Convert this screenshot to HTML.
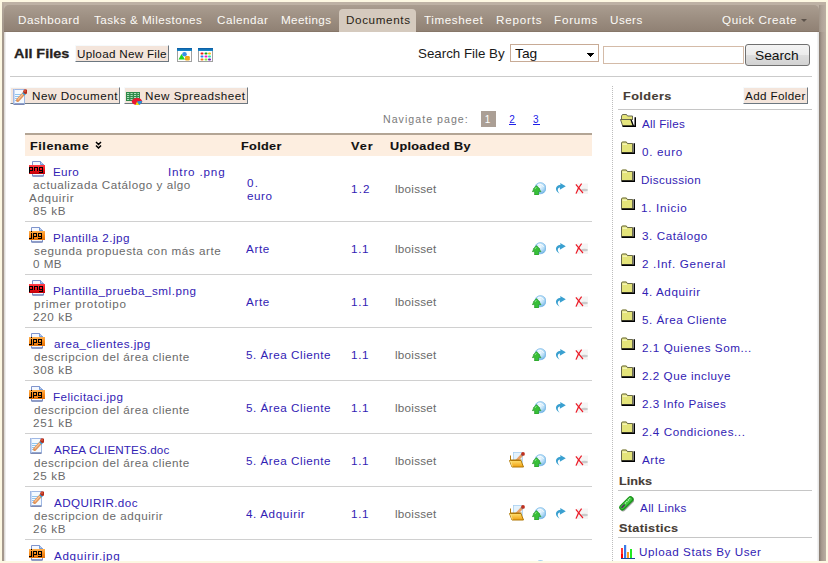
<!DOCTYPE html>
<html><head><meta charset="utf-8">
<style>
html,body{margin:0;padding:0}
body{width:828px;height:563px;overflow:hidden;position:relative;background:#fdf8e2;font-family:"Liberation Sans",sans-serif}
.a{position:absolute}
.t{position:absolute;white-space:pre;font-family:"Liberation Sans",sans-serif}
.btn{position:absolute;box-sizing:border-box;background:#f4e5db;border-top:1px solid #f6fafc;border-left:1px solid #f6fafc;border-right:1px solid #6c7780;border-bottom:1px solid #6c7780}
.sep{position:absolute;height:1px;background:#cccccc}
.ic{position:absolute}
</style></head><body>
<!-- frame -->
<div class="a" style="left:2px;top:2px;width:824px;height:559px;background:#bdb1a4"></div>
<div class="a" style="left:2px;top:2px;width:2px;height:559px;background:linear-gradient(to bottom,#bdb1a4 0,#b0a498 8px,#a69a8e 22px,#a4988c 40px)"></div>
<div class="a" style="left:819px;top:5px;width:7px;height:27px;background:linear-gradient(to right,#a09488,#b0a498 40%,#bbafa3)"></div>
<div class="a" style="left:819px;top:32px;width:7px;height:529px;background:linear-gradient(to right,#857a70,#a89b8f 40%,#bbafa3)"></div>
<div class="a" style="left:4px;top:5px;width:815px;height:27px;border-radius:5px 5px 0 0;background:linear-gradient(to bottom,#aa9d90,#9c8e81 50%,#8f8073)"></div>
<div class="a" style="left:4px;top:31px;width:815px;height:1px;background:#877769"></div>
<div class="a" style="left:339px;top:9px;width:77px;height:23px;border-radius:4px 4px 0 0;background:#d5cabe"></div>
<div class="a" style="left:801px;top:19px;width:0;height:0;border-left:3px solid transparent;border-right:3px solid transparent;border-top:3px solid #5c524a"></div>
<div class="a" style="left:4px;top:32px;width:815px;height:529px;background:#fff"></div>
<div class="a" style="left:4px;top:32px;width:2px;height:529px;background:linear-gradient(to right,#d6d1cc,#f8f8f8)"></div>
<div class="a" style="left:817px;top:32px;width:2px;height:529px;background:linear-gradient(to right,#f7f7f7,#e2e2e2)"></div>

<!-- toolbar -->
<div class="btn" style="left:75px;top:45px;width:94px;height:17px"></div>
<div class="a" style="left:510px;top:44px;width:89px;height:18px;box-sizing:border-box;border:1px solid #c8ab96;background:#fff"></div>
<svg class="a" style="left:587px;top:53px" width="7" height="4" shape-rendering="crispEdges"><path d="M0 0h7v1h-1v1h-1v1h-1v1h-1v-1h-1v-1h-1v-1h-1z" fill="#000"/></svg>
<div class="a" style="left:603px;top:46px;width:141px;height:18px;box-sizing:border-box;border:1px solid #d4bba8;background:#fff"></div>
<div class="a" style="left:745px;top:44px;width:65px;height:22px;box-sizing:border-box;border:1px solid #707070;border-radius:3px;background:linear-gradient(to bottom,#f4f4f4,#ececec 50%,#dedede 51%,#d2d2d2)"></div>
<div class="sep" style="left:10px;top:76px;width:802px;background:#cbcbcb"></div>
<div class="btn" style="left:10px;top:87px;width:110px;height:17px"></div>
<div class="btn" style="left:124px;top:87px;width:124px;height:17px"></div>

<!-- pager -->
<div class="a" style="left:481px;top:111px;width:15px;height:16px;background:#ab9f95"></div>
<div class="a" style="left:509px;top:124px;width:7px;height:1px;background:#2020e8"></div>
<div class="a" style="left:533px;top:124px;width:7px;height:1px;background:#2020e8"></div>

<!-- table -->
<div class="a" style="left:25px;top:133px;width:567px;height:2px;background:#b3a595"></div>
<div class="a" style="left:25px;top:135px;width:567px;height:21px;background:#fdeee0"></div>
<svg class="ic" style="left:95px;top:141px" width="7" height="8" viewBox="0 0 7 8"><path d="M1 1l2.5 2.5 2.5-2.5M1 4.5l2.5 2.5 2.5-2.5" stroke="#000" stroke-width="1.5" fill="none"/></svg>
<div class="sep" style="left:25px;top:221px;width:567px;background:#d0d0d0"></div>
<div class="sep" style="left:25px;top:274px;width:567px;background:#d0d0d0"></div>
<div class="sep" style="left:25px;top:327px;width:567px;background:#d0d0d0"></div>
<div class="sep" style="left:25px;top:380px;width:567px;background:#d0d0d0"></div>
<div class="sep" style="left:25px;top:433px;width:567px;background:#d0d0d0"></div>
<div class="sep" style="left:25px;top:486px;width:567px;background:#d0d0d0"></div>
<div class="sep" style="left:25px;top:539px;width:567px;background:#d0d0d0"></div>

<!-- right panel -->
<div class="a" style="left:612px;top:86px;width:1px;height:475px;background:repeating-linear-gradient(to bottom,#bdbdbd 0,#bdbdbd 1px,transparent 1px,transparent 2px)"></div>
<div class="btn" style="left:743px;top:87px;width:65px;height:17px"></div>
<div class="sep" style="left:618px;top:109px;width:194px;background:#c6c6c6"></div>
<div class="sep" style="left:618px;top:490px;width:194px;background:#c6c6c6"></div>
<div class="sep" style="left:618px;top:537px;width:194px;background:#c6c6c6"></div>


<svg width="0" height="0" style="position:absolute">
<defs>
 <linearGradient id="gRed" x1="0" y1="0" x2="0" y2="1"><stop offset="0" stop-color="#ff4048"/><stop offset="0.5" stop-color="#f01018"/><stop offset="1" stop-color="#c0000a"/></linearGradient>
 <linearGradient id="gOr" x1="0" y1="0" x2="0" y2="1"><stop offset="0" stop-color="#ffb050"/><stop offset="0.5" stop-color="#f88a18"/><stop offset="1" stop-color="#e07008"/></linearGradient>
 <linearGradient id="gFold" x1="0" y1="0" x2="0" y2="1"><stop offset="0" stop-color="#ffe070"/><stop offset="1" stop-color="#f0a010"/></linearGradient>
 <linearGradient id="gTitle" x1="0" y1="0" x2="0" y2="1"><stop offset="0" stop-color="#0a58a0"/><stop offset="1" stop-color="#1a90d0"/></linearGradient>
 <radialGradient id="gGlobe" cx="0.45" cy="0.35" r="0.75"><stop offset="0" stop-color="#f4fbff"/><stop offset="0.5" stop-color="#b4dcf6"/><stop offset="1" stop-color="#5aa6de"/></radialGradient>
 <symbol id="docpage" viewBox="0 0 16 16">
  <path d="M3.5 0.5h8l3 3v11.5h-11z" fill="#f4f8ff" stroke="#8094cc"/>
  <path d="M11.5 0.5v3h3" fill="#b8ccf0" stroke="#5a8ad0" stroke-width="0.8"/>
  <path d="M3.5 15h11" stroke="#6070a8"/>
 </symbol>
 <symbol id="ipng" viewBox="0 0 16 16">
  <use href="#docpage" width="16" height="16"/>
  <rect x="0" y="4" width="16" height="9" fill="url(#gRed)"/>
  <path shape-rendering="crispEdges" d="M0 6h4v1h-3v2h2v-2h1v3h-3v2h-1zM5 6h4v4h-1v-3h-2v3h-1zM10 6h4v6h-4v-1h3v-1h-3zM11 7v2h2v-2z" fill="#000"/>
 </symbol>
 <symbol id="ijpg" viewBox="0 0 16 16">
  <use href="#docpage" x="-1" width="16" height="16"/>
  <rect x="0" y="4" width="16" height="9" fill="url(#gOr)"/>
  <path shape-rendering="crispEdges" d="M2 4h1v1h-1zM2 6h1v6h-3v-1h2zM4 6h4v4h-3v2h-1zM5 7v2h2v-2zM9 6h4v6h-4v-1h3v-1h-3zM10 7v2h2v-2z" fill="#000"/>
 </symbol>
 <symbol id="idoc" viewBox="0 0 16 16"><use href="#inewdoc" width="16" height="16"/></symbol>
 <symbol id="iedit" viewBox="0 0 16 16">
  <rect x="4.5" y="0.5" width="9" height="10" fill="#e4f2fc" stroke="#a8d0f0" stroke-width="0.8"/>
  <path d="M7.2 9.2L13 3" stroke="#e8a068" stroke-width="2.6" stroke-linecap="round"/>
  <path d="M12.2 2.2l1.6 1.6" stroke="#38a8e0" stroke-width="1.2"/>
  <circle cx="14" cy="1.9" r="1.9" fill="#c0301e"/>
  <path d="M1.5 3.5v4.5h11" fill="none" stroke="#b07808" stroke-width="1"/>
  <path d="M0.5 8.5h11.5l2.5 6.5h-11.5z" fill="url(#gFold)" stroke="#b07808" stroke-width="1" stroke-linejoin="round"/>
  <path d="M1.5 8.8l1.8 5.8" stroke="#fff0a0" stroke-width="0.8"/>
 </symbol>
 <symbol id="iglobe" viewBox="0 0 14 13">
  <circle cx="8.4" cy="6.2" r="5.6" fill="url(#gGlobe)" stroke="#6cb0e4" stroke-width="0.6"/>
  <path d="M6 2.5c2.5-0.8 5 0.5 5.5 2.5" stroke="#ffffff" stroke-width="1" fill="none" opacity="0.8"/>
  <path d="M4.5 3.6L8 7.2H7.1L9 9.6H6.6V13H2.6V9.6H0.2L2.1 7.2H1.1z" fill="#38c038" stroke="#188c18" stroke-width="0.6" stroke-linejoin="round"/>
  <path d="M4.4 5l-1.6 2.2" stroke="#a0f0a0" stroke-width="0.8"/>
 </symbol>
 <symbol id="iarrow" viewBox="0 0 11 11">
  <path d="M5 11C0 8.5 -1 3 5.5 1.8L5.2 0L10.8 3.2L4.8 6.8L5 4.6C2.5 5 1.6 7.5 5 11z" fill="#3aa0d0"/>
 </symbol>
 <symbol id="ix" viewBox="0 0 13 11">
  <rect x="2" y="0.5" width="11" height="10.5" fill="#f5f5f5"/>
  <ellipse cx="9.5" cy="7" rx="3.4" ry="1.3" fill="#cacaca"/>
  <path d="M0.9 1.4C3 4 5.5 7.5 8 10" stroke="#ec1c28" stroke-width="1.25" fill="none"/>
  <path d="M6.6 0.6C4.5 3 2.5 6.5 1 10.6" stroke="#ec1c28" stroke-width="1.25" fill="none"/>
 </symbol>
 <symbol id="ifold" viewBox="0 0 15 13">
  <path d="M1 12v-10l1-1.5h4.5l1 1.5h5.5v10z" fill="#e4e47a"/>
  <path d="M1.5 11.5v-9.5l0.8-1h4l1 1.5h5.2v9z" fill="none" stroke="#5a5a48" stroke-width="0.9"/>
  <path d="M2.5 3.2h4.5" stroke="#fafad0" stroke-width="1"/>
  <path d="M1.5 12.2h12.8v-10" stroke="#000" stroke-width="1.6" fill="none"/>
 </symbol>
 <symbol id="ifoldopen" viewBox="0 0 16 13">
  <path d="M1.5 7v-5l1-1.5h4l1 1.5h5v4" fill="#e4e47a" stroke="#5a5a48" stroke-width="0.9"/>
  <path d="M0.5 5.5h10.5l2.2 6.5h-10.5z" fill="#e6e67e" stroke="#5a5a48" stroke-width="0.9"/>
  <path d="M2.5 12.2h12.8v-9" stroke="#000" stroke-width="1.6" fill="none"/>
  <path d="M11 5.5l2.4 6.5" stroke="#000" stroke-width="1.2"/>
 </symbol>
 <symbol id="iclip" viewBox="0 0 16 16">
  <path d="M5 12l7.8-7.8" stroke="#282828" stroke-width="6.6" stroke-linecap="round" opacity="0.4"/>
  <path d="M4.4 11.4l8-8" stroke="#1c961c" stroke-width="6.2" stroke-linecap="round"/>
  <path d="M4.2 11.2l8-8" stroke="#40c840" stroke-width="3.6" stroke-linecap="round"/>
  <path d="M7 7.4l5-5" stroke="#e0ffe0" stroke-width="1.2" stroke-dasharray="1.2 0.9"/>
  <path d="M4 11.4l2.2-2.2" stroke="#503858" stroke-width="1.8" stroke-linecap="round"/>
 </symbol>
 <symbol id="ichart" viewBox="0 0 15 14">
  <rect x="1" y="3" width="2" height="10" fill="#ff3838"/>
  <rect x="1" y="9" width="2" height="4" fill="#f00"/>
  <rect x="4" y="0" width="2.2" height="13" fill="#3a78e8"/>
  <rect x="7" y="7" width="2" height="6" fill="#f8a020"/>
  <rect x="10" y="4" width="2" height="9" fill="#22e822"/>
  <rect x="1" y="13" width="14" height="1.4" fill="#1a4a9a"/>
 </symbol>
 <symbol id="iwin1" viewBox="0 0 15 14">
  <rect x="0.5" y="0.5" width="14" height="13" fill="#fff" stroke="#a0a0a0"/>
  <rect x="0" y="0" width="15" height="3" fill="url(#gTitle)"/>
  <path d="M1.5 11.5l3-5.5 3.5 5.5z" fill="#20d820"/>
  <circle cx="7.5" cy="6.3" r="2.3" fill="#3a90e8"/>
  <rect x="8" y="8" width="4.8" height="4.5" rx="1.2" fill="#f0a818"/>
 </symbol>
 <symbol id="iwin2" viewBox="0 0 15 14">
  <rect x="0.5" y="0.5" width="14" height="13" fill="#fff" stroke="#a0a0a0"/>
  <rect x="0" y="0" width="15" height="3" fill="url(#gTitle)"/>
  <rect x="2.5" y="4.5" width="3" height="2" rx="1" fill="#f01818"/><rect x="6.5" y="4.5" width="3" height="2" rx="1" fill="#18a018"/><rect x="10" y="4.5" width="3" height="2" rx="1" fill="#f0c010"/>
  <rect x="2.5" y="7.5" width="3" height="2" rx="1" fill="#2080f0"/><rect x="6.5" y="7.5" width="3" height="2" rx="1" fill="#f018c8"/><rect x="10" y="7.5" width="3" height="2" rx="1" fill="#20e8b0"/>
  <rect x="2.5" y="10.5" width="3" height="2" rx="1" fill="#f87818"/><rect x="6.5" y="10.5" width="3" height="2" rx="1" fill="#80f040"/><rect x="10" y="10.5" width="3" height="2" rx="1" fill="#7010c0"/>
 </symbol>
 <symbol id="inewdoc" viewBox="0 0 16 16">
  <rect x="2.5" y="0.5" width="11" height="14.3" fill="#f4faff" stroke="#a0b8e4"/>
  <path d="M2.5 15.2h11" stroke="#6878a8" stroke-width="1.3"/>
  <path d="M3.5 0.5v14" stroke="#c8d8f4" stroke-width="1"/>
  <path d="M4 5.5h6M4 7.5h6M4 9.5h5M4 11.5h4" stroke="#90c4ee"/>
  <path d="M6.6 11.3L12.8 4.6" stroke="#e2945a" stroke-width="3.4" stroke-linecap="round"/>
  <path d="M6.8 10.6L12.4 4.6" stroke="#fac89a" stroke-width="1.1"/>
  <path d="M11.8 3.6l2.4 2.4" stroke="#30a0e0" stroke-width="1.7"/>
  <circle cx="14.5" cy="2.6" r="2.3" fill="#b42a18"/>
  <circle cx="14" cy="2" r="0.9" fill="#e06040"/>
 </symbol>
 <symbol id="isheet" viewBox="0 0 17 13">
  <rect x="0" y="0" width="14" height="9" fill="#2f8a4a"/>
  <path d="M1 1.5h12M1 3.5h12M1 5.5h12M1 7.5h12" stroke="#bde8c8" stroke-width="0.9" stroke-dasharray="2.2 1.3"/>
  <ellipse cx="11" cy="9.5" rx="5.2" ry="3.5" fill="#e81830"/>
  <path d="M11 9.5l-1.5 3.5h4z" fill="#f0e010"/>
  <path d="M11 9.5l4.8-0.8 0 2-2.5 2.3z" fill="#2098e0"/>
 </symbol>
</defs>
</svg>
<svg class="ic" style="left:177px;top:48px" width="15" height="14"><use href="#iwin1" width="15" height="14"/></svg>
<svg class="ic" style="left:198px;top:48px" width="15" height="14"><use href="#iwin2" width="15" height="14"/></svg>
<svg class="ic" style="left:11px;top:89px" width="16" height="16"><use href="#inewdoc" width="16" height="16"/></svg>
<svg class="ic" style="left:126px;top:92px" width="17" height="13"><use href="#isheet" width="17" height="13"/></svg>
<svg class="ic" style="left:29px;top:161px" width="16" height="16"><use href="#ipng" width="16" height="16"/></svg>
<svg class="ic" style="left:29px;top:227px" width="16" height="16"><use href="#ijpg" width="16" height="16"/></svg>
<svg class="ic" style="left:29px;top:280px" width="16" height="16"><use href="#ipng" width="16" height="16"/></svg>
<svg class="ic" style="left:29px;top:333px" width="16" height="16"><use href="#ijpg" width="16" height="16"/></svg>
<svg class="ic" style="left:29px;top:386px" width="16" height="16"><use href="#ijpg" width="16" height="16"/></svg>
<svg class="ic" style="left:28px;top:438px" width="16" height="16"><use href="#idoc" width="16" height="16"/></svg>
<svg class="ic" style="left:28px;top:491px" width="16" height="16"><use href="#idoc" width="16" height="16"/></svg>
<svg class="ic" style="left:29px;top:545px" width="16" height="16"><use href="#ijpg" width="16" height="16"/></svg>
<svg class="ic" style="left:532px;top:182px" width="14" height="13"><use href="#iglobe" width="14" height="13"/></svg>
<svg class="ic" style="left:555px;top:183px" width="11" height="11"><use href="#iarrow" width="11" height="11"/></svg>
<svg class="ic" style="left:575px;top:183px" width="13" height="11"><use href="#ix" width="13" height="11"/></svg>
<svg class="ic" style="left:532px;top:242px" width="14" height="13"><use href="#iglobe" width="14" height="13"/></svg>
<svg class="ic" style="left:555px;top:243px" width="11" height="11"><use href="#iarrow" width="11" height="11"/></svg>
<svg class="ic" style="left:575px;top:243px" width="13" height="11"><use href="#ix" width="13" height="11"/></svg>
<svg class="ic" style="left:532px;top:295px" width="14" height="13"><use href="#iglobe" width="14" height="13"/></svg>
<svg class="ic" style="left:555px;top:296px" width="11" height="11"><use href="#iarrow" width="11" height="11"/></svg>
<svg class="ic" style="left:575px;top:296px" width="13" height="11"><use href="#ix" width="13" height="11"/></svg>
<svg class="ic" style="left:532px;top:348px" width="14" height="13"><use href="#iglobe" width="14" height="13"/></svg>
<svg class="ic" style="left:555px;top:349px" width="11" height="11"><use href="#iarrow" width="11" height="11"/></svg>
<svg class="ic" style="left:575px;top:349px" width="13" height="11"><use href="#ix" width="13" height="11"/></svg>
<svg class="ic" style="left:532px;top:401px" width="14" height="13"><use href="#iglobe" width="14" height="13"/></svg>
<svg class="ic" style="left:555px;top:402px" width="11" height="11"><use href="#iarrow" width="11" height="11"/></svg>
<svg class="ic" style="left:575px;top:402px" width="13" height="11"><use href="#ix" width="13" height="11"/></svg>
<svg class="ic" style="left:509px;top:452px" width="16" height="16"><use href="#iedit" width="16" height="16"/></svg>
<svg class="ic" style="left:532px;top:454px" width="14" height="13"><use href="#iglobe" width="14" height="13"/></svg>
<svg class="ic" style="left:555px;top:455px" width="11" height="11"><use href="#iarrow" width="11" height="11"/></svg>
<svg class="ic" style="left:575px;top:455px" width="13" height="11"><use href="#ix" width="13" height="11"/></svg>
<svg class="ic" style="left:509px;top:505px" width="16" height="16"><use href="#iedit" width="16" height="16"/></svg>
<svg class="ic" style="left:532px;top:507px" width="14" height="13"><use href="#iglobe" width="14" height="13"/></svg>
<svg class="ic" style="left:555px;top:508px" width="11" height="11"><use href="#iarrow" width="11" height="11"/></svg>
<svg class="ic" style="left:575px;top:508px" width="13" height="11"><use href="#ix" width="13" height="11"/></svg>
<svg class="ic" style="left:532px;top:560px" width="14" height="13"><use href="#iglobe" width="14" height="13"/></svg>
<svg class="ic" style="left:555px;top:561px" width="11" height="11"><use href="#iarrow" width="11" height="11"/></svg>
<svg class="ic" style="left:575px;top:561px" width="13" height="11"><use href="#ix" width="13" height="11"/></svg>
<svg class="ic" style="left:620px;top:114px" width="16" height="13"><use href="#ifoldopen" width="16" height="13"/></svg>
<svg class="ic" style="left:620px;top:141px" width="15" height="13"><use href="#ifold" width="15" height="13"/></svg>
<svg class="ic" style="left:620px;top:169px" width="15" height="13"><use href="#ifold" width="15" height="13"/></svg>
<svg class="ic" style="left:620px;top:197px" width="15" height="13"><use href="#ifold" width="15" height="13"/></svg>
<svg class="ic" style="left:620px;top:225px" width="15" height="13"><use href="#ifold" width="15" height="13"/></svg>
<svg class="ic" style="left:620px;top:253px" width="15" height="13"><use href="#ifold" width="15" height="13"/></svg>
<svg class="ic" style="left:620px;top:281px" width="15" height="13"><use href="#ifold" width="15" height="13"/></svg>
<svg class="ic" style="left:620px;top:309px" width="15" height="13"><use href="#ifold" width="15" height="13"/></svg>
<svg class="ic" style="left:620px;top:337px" width="15" height="13"><use href="#ifold" width="15" height="13"/></svg>
<svg class="ic" style="left:620px;top:365px" width="15" height="13"><use href="#ifold" width="15" height="13"/></svg>
<svg class="ic" style="left:620px;top:393px" width="15" height="13"><use href="#ifold" width="15" height="13"/></svg>
<svg class="ic" style="left:620px;top:421px" width="15" height="13"><use href="#ifold" width="15" height="13"/></svg>
<svg class="ic" style="left:620px;top:449px" width="15" height="13"><use href="#ifold" width="15" height="13"/></svg>
<svg class="ic" style="left:618px;top:496px" width="16" height="16"><use href="#iclip" width="16" height="16"/></svg>
<svg class="ic" style="left:620px;top:545px" width="15" height="14"><use href="#ichart" width="15" height="14"/></svg>
<div class="t" style="left:17.6px;top:15.0px;font-size:11px;line-height:11px;font-weight:400;color:#fcfaf6;letter-spacing:0.49px;transform:scaleX(1.060);transform-origin:0 0;">Dashboard</div>
<div class="t" style="left:94.0px;top:15.0px;font-size:11px;line-height:11px;font-weight:400;color:#fcfaf6;letter-spacing:0.45px;transform:scaleX(1.060);transform-origin:0 0;">Tasks &amp; Milestones</div>
<div class="t" style="left:216.6px;top:15.0px;font-size:11px;line-height:11px;font-weight:400;color:#fcfaf6;letter-spacing:0.47px;transform:scaleX(1.060);transform-origin:0 0;">Calendar</div>
<div class="t" style="left:281.4px;top:15.0px;font-size:11px;line-height:11px;font-weight:400;color:#fcfaf6;letter-spacing:0.36px;transform:scaleX(1.060);transform-origin:0 0;">Meetings</div>
<div class="t" style="left:424.2px;top:15.0px;font-size:11px;line-height:11px;font-weight:400;color:#fcfaf6;letter-spacing:0.56px;transform:scaleX(1.060);transform-origin:0 0;">Timesheet</div>
<div class="t" style="left:495.9px;top:15.0px;font-size:11px;line-height:11px;font-weight:400;color:#fcfaf6;letter-spacing:0.75px;transform:scaleX(1.060);transform-origin:0 0;">Reports</div>
<div class="t" style="left:553.9px;top:15.0px;font-size:11px;line-height:11px;font-weight:400;color:#fcfaf6;letter-spacing:0.72px;transform:scaleX(1.060);transform-origin:0 0;">Forums</div>
<div class="t" style="left:609.9px;top:15.0px;font-size:11px;line-height:11px;font-weight:400;color:#fcfaf6;letter-spacing:0.43px;transform:scaleX(1.060);transform-origin:0 0;">Users</div>
<div class="t" style="left:722.4px;top:15.0px;font-size:11px;line-height:11px;font-weight:400;color:#fcfaf6;letter-spacing:0.55px;transform:scaleX(1.060);transform-origin:0 0;">Quick Create</div>
<div class="t" style="left:345.6px;top:15.0px;font-size:11px;line-height:11px;font-weight:400;color:#2a1e16;letter-spacing:0.59px;transform:scaleX(1.060);transform-origin:0 0;">Documents</div>
<div class="t" style="left:13.5px;top:47.0px;font-size:13px;line-height:13px;font-weight:700;color:#262220;letter-spacing:0.00px;transform:scaleX(1.106);transform-origin:0 0;-webkit-text-stroke:0.3px #262220;">All Files</div>
<div class="t" style="left:76.6px;top:49.0px;font-size:11px;line-height:11px;font-weight:400;color:#111;letter-spacing:0.27px;transform:scaleX(1.060);transform-origin:0 0;">Upload New File</div>
<div class="t" style="left:418.2px;top:47.0px;font-size:13px;line-height:13px;font-weight:400;color:#1a1a1a;letter-spacing:0.00px;transform:scaleX(1.025);transform-origin:0 0;">Search File By</div>
<div class="t" style="left:515.3px;top:47.0px;font-size:13px;line-height:13px;font-weight:400;color:#111;letter-spacing:0.02px;transform:scaleX(1.060);transform-origin:0 0;">Tag</div>
<div class="t" style="left:755.1px;top:49.0px;font-size:13px;line-height:13px;font-weight:400;color:#111;letter-spacing:0.00px;transform:scaleX(1.060);transform-origin:0 0;">Search</div>
<div class="t" style="left:31.7px;top:91.0px;font-size:11px;line-height:11px;font-weight:400;color:#111;letter-spacing:0.49px;transform:scaleX(1.060);transform-origin:0 0;">New Document</div>
<div class="t" style="left:145.2px;top:91.0px;font-size:11px;line-height:11px;font-weight:400;color:#111;letter-spacing:0.50px;transform:scaleX(1.060);transform-origin:0 0;">New Spreadsheet</div>
<div class="t" style="left:382.6px;top:115.0px;font-size:10px;line-height:10px;font-weight:400;color:#7a7a7a;letter-spacing:0.97px;transform:scaleX(1.060);transform-origin:0 0;">Navigate page:</div>
<div class="t" style="left:484.7px;top:115.0px;font-size:10px;line-height:10px;font-weight:400;color:#fff;letter-spacing:0.00px;">1</div>
<div class="t" style="left:509.2px;top:115.0px;font-size:10px;line-height:10px;font-weight:400;color:#2020e8;letter-spacing:0.00px;">2</div>
<div class="t" style="left:533.0px;top:115.0px;font-size:10px;line-height:10px;font-weight:400;color:#2020e8;letter-spacing:0.00px;">3</div>
<div class="t" style="left:29.6px;top:141.0px;font-size:11px;line-height:11px;font-weight:700;color:#111;letter-spacing:0.48px;transform:scaleX(1.150);transform-origin:0 0;-webkit-text-stroke:0.12px #111;">Filename</div>
<div class="t" style="left:240.5px;top:141.0px;font-size:11px;line-height:11px;font-weight:700;color:#111;letter-spacing:0.31px;transform:scaleX(1.150);transform-origin:0 0;-webkit-text-stroke:0.12px #111;">Folder</div>
<div class="t" style="left:351.4px;top:141.0px;font-size:11px;line-height:11px;font-weight:700;color:#111;letter-spacing:0.89px;transform:scaleX(1.150);transform-origin:0 0;-webkit-text-stroke:0.12px #111;">Ver</div>
<div class="t" style="left:390.3px;top:141.0px;font-size:11px;line-height:11px;font-weight:700;color:#111;letter-spacing:0.27px;transform:scaleX(1.150);transform-origin:0 0;-webkit-text-stroke:0.12px #111;">Uploaded By</div>
<div class="t" style="left:622.5px;top:91.0px;font-size:11px;line-height:11px;font-weight:700;color:#463c35;letter-spacing:0.39px;transform:scaleX(1.150);transform-origin:0 0;-webkit-text-stroke:0.12px #463c35;">Folders</div>
<div class="t" style="left:745.3px;top:91.0px;font-size:11px;line-height:11px;font-weight:400;color:#111;letter-spacing:0.34px;transform:scaleX(1.060);transform-origin:0 0;">Add Folder</div>
<div class="t" style="left:641.8px;top:119.0px;font-size:11px;line-height:11px;font-weight:400;color:#3222b4;letter-spacing:0.23px;transform:scaleX(1.060);transform-origin:0 0;">All Files</div>
<div class="t" style="left:641.8px;top:147.0px;font-size:11px;line-height:11px;font-weight:400;color:#3222b4;letter-spacing:0.62px;transform:scaleX(1.060);transform-origin:0 0;">0. euro</div>
<div class="t" style="left:640.7px;top:175.0px;font-size:11px;line-height:11px;font-weight:400;color:#3222b4;letter-spacing:0.35px;transform:scaleX(1.060);transform-origin:0 0;">Discussion</div>
<div class="t" style="left:640.7px;top:203.0px;font-size:11px;line-height:11px;font-weight:400;color:#3222b4;letter-spacing:0.66px;transform:scaleX(1.060);transform-origin:0 0;">1. Inicio</div>
<div class="t" style="left:641.8px;top:231.0px;font-size:11px;line-height:11px;font-weight:400;color:#3222b4;letter-spacing:0.53px;transform:scaleX(1.060);transform-origin:0 0;">3. Cat&aacute;logo</div>
<div class="t" style="left:641.8px;top:259.0px;font-size:11px;line-height:11px;font-weight:400;color:#3222b4;letter-spacing:0.64px;transform:scaleX(1.060);transform-origin:0 0;">2 .Inf. General</div>
<div class="t" style="left:641.8px;top:287.0px;font-size:11px;line-height:11px;font-weight:400;color:#3222b4;letter-spacing:0.53px;transform:scaleX(1.060);transform-origin:0 0;">4. Adquirir</div>
<div class="t" style="left:641.8px;top:315.0px;font-size:11px;line-height:11px;font-weight:400;color:#3222b4;letter-spacing:0.50px;transform:scaleX(1.060);transform-origin:0 0;">5. &Aacute;rea Cliente</div>
<div class="t" style="left:641.8px;top:343.0px;font-size:11px;line-height:11px;font-weight:400;color:#3222b4;letter-spacing:0.53px;transform:scaleX(1.060);transform-origin:0 0;">2.1 Quienes Som...</div>
<div class="t" style="left:641.8px;top:371.0px;font-size:11px;line-height:11px;font-weight:400;color:#3222b4;letter-spacing:0.50px;transform:scaleX(1.060);transform-origin:0 0;">2.2 Que incluye</div>
<div class="t" style="left:641.8px;top:399.0px;font-size:11px;line-height:11px;font-weight:400;color:#3222b4;letter-spacing:0.45px;transform:scaleX(1.060);transform-origin:0 0;">2.3 Info Paises</div>
<div class="t" style="left:641.8px;top:427.0px;font-size:11px;line-height:11px;font-weight:400;color:#3222b4;letter-spacing:0.53px;transform:scaleX(1.060);transform-origin:0 0;">2.4 Condiciones...</div>
<div class="t" style="left:641.8px;top:455.0px;font-size:11px;line-height:11px;font-weight:400;color:#3222b4;letter-spacing:0.47px;transform:scaleX(1.060);transform-origin:0 0;">Arte</div>
<div class="t" style="left:618.5px;top:476.0px;font-size:11px;line-height:11px;font-weight:700;color:#463c35;letter-spacing:0.00px;transform:scaleX(1.148);transform-origin:0 0;-webkit-text-stroke:0.12px #463c35;">Links</div>
<div class="t" style="left:639.6px;top:503.0px;font-size:11px;line-height:11px;font-weight:400;color:#3222b4;letter-spacing:0.35px;transform:scaleX(1.060);transform-origin:0 0;">All Links</div>
<div class="t" style="left:618.5px;top:523.0px;font-size:11px;line-height:11px;font-weight:700;color:#463c35;letter-spacing:0.28px;transform:scaleX(1.150);transform-origin:0 0;-webkit-text-stroke:0.12px #463c35;">Statistics</div>
<div class="t" style="left:638.9px;top:547.0px;font-size:11px;line-height:11px;font-weight:400;color:#3222b4;letter-spacing:0.52px;transform:scaleX(1.060);transform-origin:0 0;">Upload Stats By User</div>
<div class="t" style="left:52.9px;top:167.0px;font-size:11px;line-height:11px;font-weight:400;color:#3222b4;letter-spacing:0.31px;transform:scaleX(1.060);transform-origin:0 0;">Euro</div>
<div class="t" style="left:167.7px;top:167.0px;font-size:11px;line-height:11px;font-weight:400;color:#3222b4;letter-spacing:0.77px;transform:scaleX(1.060);transform-origin:0 0;">Intro .png</div>
<div class="t" style="left:33.4px;top:180.0px;font-size:11px;line-height:11px;font-weight:400;color:#6a6a6a;letter-spacing:0.51px;transform:scaleX(1.060);transform-origin:0 0;">actualizada Cat&aacute;logo y algo</div>
<div class="t" style="left:29.3px;top:193.0px;font-size:11px;line-height:11px;font-weight:400;color:#6a6a6a;letter-spacing:0.61px;transform:scaleX(1.060);transform-origin:0 0;">Adquirir</div>
<div class="t" style="left:33.4px;top:206.0px;font-size:11px;line-height:11px;font-weight:400;color:#6a6a6a;letter-spacing:0.64px;transform:scaleX(1.060);transform-origin:0 0;">85 kB</div>
<div class="t" style="left:246.7px;top:178.0px;font-size:11px;line-height:11px;font-weight:400;color:#3222b4;letter-spacing:1.15px;transform:scaleX(1.060);transform-origin:0 0;">0.</div>
<div class="t" style="left:246.7px;top:191.0px;font-size:11px;line-height:11px;font-weight:400;color:#3222b4;letter-spacing:0.53px;transform:scaleX(1.060);transform-origin:0 0;">euro</div>
<div class="t" style="left:350.6px;top:184.0px;font-size:11px;line-height:11px;font-weight:400;color:#3222b4;letter-spacing:1.11px;transform:scaleX(1.060);transform-origin:0 0;">1.2</div>
<div class="t" style="left:395.0px;top:184.0px;font-size:11px;line-height:11px;font-weight:400;color:#6a6a6a;letter-spacing:0.23px;transform:scaleX(1.060);transform-origin:0 0;">lboisset</div>
<div class="t" style="left:52.9px;top:233.0px;font-size:11px;line-height:11px;font-weight:400;color:#3222b4;letter-spacing:0.48px;transform:scaleX(1.060);transform-origin:0 0;">Plantilla 2.jpg</div>
<div class="t" style="left:33.8px;top:246.0px;font-size:11px;line-height:11px;font-weight:400;color:#6a6a6a;letter-spacing:0.53px;transform:scaleX(1.060);transform-origin:0 0;">segunda propuesta con m&aacute;s arte</div>
<div class="t" style="left:33.3px;top:259.0px;font-size:11px;line-height:11px;font-weight:400;color:#6a6a6a;letter-spacing:0.44px;transform:scaleX(1.060);transform-origin:0 0;">0 MB</div>
<div class="t" style="left:246.3px;top:244.0px;font-size:11px;line-height:11px;font-weight:400;color:#3222b4;letter-spacing:0.60px;transform:scaleX(1.060);transform-origin:0 0;">Arte</div>
<div class="t" style="left:350.9px;top:244.0px;font-size:11px;line-height:11px;font-weight:400;color:#3222b4;letter-spacing:0.64px;transform:scaleX(1.060);transform-origin:0 0;">1.1</div>
<div class="t" style="left:395.0px;top:244.0px;font-size:11px;line-height:11px;font-weight:400;color:#6a6a6a;letter-spacing:0.23px;transform:scaleX(1.060);transform-origin:0 0;">lboisset</div>
<div class="t" style="left:52.9px;top:286.0px;font-size:11px;line-height:11px;font-weight:400;color:#3222b4;letter-spacing:0.49px;transform:scaleX(1.060);transform-origin:0 0;">Plantilla_prueba_sml.png</div>
<div class="t" style="left:33.8px;top:299.0px;font-size:11px;line-height:11px;font-weight:400;color:#6a6a6a;letter-spacing:0.65px;transform:scaleX(1.060);transform-origin:0 0;">primer prototipo</div>
<div class="t" style="left:33.3px;top:312.0px;font-size:11px;line-height:11px;font-weight:400;color:#6a6a6a;letter-spacing:0.62px;transform:scaleX(1.060);transform-origin:0 0;">220 kB</div>
<div class="t" style="left:246.3px;top:297.0px;font-size:11px;line-height:11px;font-weight:400;color:#3222b4;letter-spacing:0.60px;transform:scaleX(1.060);transform-origin:0 0;">Arte</div>
<div class="t" style="left:350.9px;top:297.0px;font-size:11px;line-height:11px;font-weight:400;color:#3222b4;letter-spacing:0.64px;transform:scaleX(1.060);transform-origin:0 0;">1.1</div>
<div class="t" style="left:395.0px;top:297.0px;font-size:11px;line-height:11px;font-weight:400;color:#6a6a6a;letter-spacing:0.23px;transform:scaleX(1.060);transform-origin:0 0;">lboisset</div>
<div class="t" style="left:54.0px;top:339.0px;font-size:11px;line-height:11px;font-weight:400;color:#3222b4;letter-spacing:0.48px;transform:scaleX(1.060);transform-origin:0 0;">area_clientes.jpg</div>
<div class="t" style="left:33.8px;top:352.0px;font-size:11px;line-height:11px;font-weight:400;color:#6a6a6a;letter-spacing:0.49px;transform:scaleX(1.060);transform-origin:0 0;">descripcion del &aacute;rea cliente</div>
<div class="t" style="left:33.3px;top:365.0px;font-size:11px;line-height:11px;font-weight:400;color:#6a6a6a;letter-spacing:0.62px;transform:scaleX(1.060);transform-origin:0 0;">308 kB</div>
<div class="t" style="left:246.3px;top:350.0px;font-size:11px;line-height:11px;font-weight:400;color:#3222b4;letter-spacing:0.50px;transform:scaleX(1.060);transform-origin:0 0;">5. &Aacute;rea Cliente</div>
<div class="t" style="left:350.9px;top:350.0px;font-size:11px;line-height:11px;font-weight:400;color:#3222b4;letter-spacing:0.64px;transform:scaleX(1.060);transform-origin:0 0;">1.1</div>
<div class="t" style="left:395.0px;top:350.0px;font-size:11px;line-height:11px;font-weight:400;color:#6a6a6a;letter-spacing:0.23px;transform:scaleX(1.060);transform-origin:0 0;">lboisset</div>
<div class="t" style="left:52.9px;top:392.0px;font-size:11px;line-height:11px;font-weight:400;color:#3222b4;letter-spacing:0.42px;transform:scaleX(1.060);transform-origin:0 0;">Felicitaci.jpg</div>
<div class="t" style="left:33.8px;top:405.0px;font-size:11px;line-height:11px;font-weight:400;color:#6a6a6a;letter-spacing:0.49px;transform:scaleX(1.060);transform-origin:0 0;">descripcion del &aacute;rea cliente</div>
<div class="t" style="left:33.3px;top:418.0px;font-size:11px;line-height:11px;font-weight:400;color:#6a6a6a;letter-spacing:0.62px;transform:scaleX(1.060);transform-origin:0 0;">251 kB</div>
<div class="t" style="left:246.3px;top:403.0px;font-size:11px;line-height:11px;font-weight:400;color:#3222b4;letter-spacing:0.50px;transform:scaleX(1.060);transform-origin:0 0;">5. &Aacute;rea Cliente</div>
<div class="t" style="left:350.9px;top:403.0px;font-size:11px;line-height:11px;font-weight:400;color:#3222b4;letter-spacing:0.64px;transform:scaleX(1.060);transform-origin:0 0;">1.1</div>
<div class="t" style="left:395.0px;top:403.0px;font-size:11px;line-height:11px;font-weight:400;color:#6a6a6a;letter-spacing:0.23px;transform:scaleX(1.060);transform-origin:0 0;">lboisset</div>
<div class="t" style="left:54.0px;top:445.0px;font-size:11px;line-height:11px;font-weight:400;color:#3222b4;letter-spacing:0.11px;transform:scaleX(1.060);transform-origin:0 0;">AREA CLIENTES.doc</div>
<div class="t" style="left:33.8px;top:458.0px;font-size:11px;line-height:11px;font-weight:400;color:#6a6a6a;letter-spacing:0.49px;transform:scaleX(1.060);transform-origin:0 0;">descripcion del &aacute;rea cliente</div>
<div class="t" style="left:33.3px;top:471.0px;font-size:11px;line-height:11px;font-weight:400;color:#6a6a6a;letter-spacing:0.64px;transform:scaleX(1.060);transform-origin:0 0;">25 kB</div>
<div class="t" style="left:246.3px;top:456.0px;font-size:11px;line-height:11px;font-weight:400;color:#3222b4;letter-spacing:0.50px;transform:scaleX(1.060);transform-origin:0 0;">5. &Aacute;rea Cliente</div>
<div class="t" style="left:350.9px;top:456.0px;font-size:11px;line-height:11px;font-weight:400;color:#3222b4;letter-spacing:0.64px;transform:scaleX(1.060);transform-origin:0 0;">1.1</div>
<div class="t" style="left:395.0px;top:456.0px;font-size:11px;line-height:11px;font-weight:400;color:#6a6a6a;letter-spacing:0.23px;transform:scaleX(1.060);transform-origin:0 0;">lboisset</div>
<div class="t" style="left:54.0px;top:498.0px;font-size:11px;line-height:11px;font-weight:400;color:#3222b4;letter-spacing:0.38px;transform:scaleX(1.060);transform-origin:0 0;">ADQUIRIR.doc</div>
<div class="t" style="left:33.8px;top:511.0px;font-size:11px;line-height:11px;font-weight:400;color:#6a6a6a;letter-spacing:0.49px;transform:scaleX(1.060);transform-origin:0 0;">descripcion de adquirir</div>
<div class="t" style="left:33.3px;top:524.0px;font-size:11px;line-height:11px;font-weight:400;color:#6a6a6a;letter-spacing:0.64px;transform:scaleX(1.060);transform-origin:0 0;">26 kB</div>
<div class="t" style="left:246.3px;top:509.0px;font-size:11px;line-height:11px;font-weight:400;color:#3222b4;letter-spacing:0.59px;transform:scaleX(1.060);transform-origin:0 0;">4. Adquirir</div>
<div class="t" style="left:350.9px;top:509.0px;font-size:11px;line-height:11px;font-weight:400;color:#3222b4;letter-spacing:0.64px;transform:scaleX(1.060);transform-origin:0 0;">1.1</div>
<div class="t" style="left:395.0px;top:509.0px;font-size:11px;line-height:11px;font-weight:400;color:#6a6a6a;letter-spacing:0.23px;transform:scaleX(1.060);transform-origin:0 0;">lboisset</div>
<div class="t" style="left:54.0px;top:551.0px;font-size:11px;line-height:11px;font-weight:400;color:#3222b4;letter-spacing:0.63px;transform:scaleX(1.060);transform-origin:0 0;">Adquirir.jpg</div>
<div class="a" style="left:0;top:561px;width:828px;height:2px;background:#fdf8e2"></div>
</body></html>
